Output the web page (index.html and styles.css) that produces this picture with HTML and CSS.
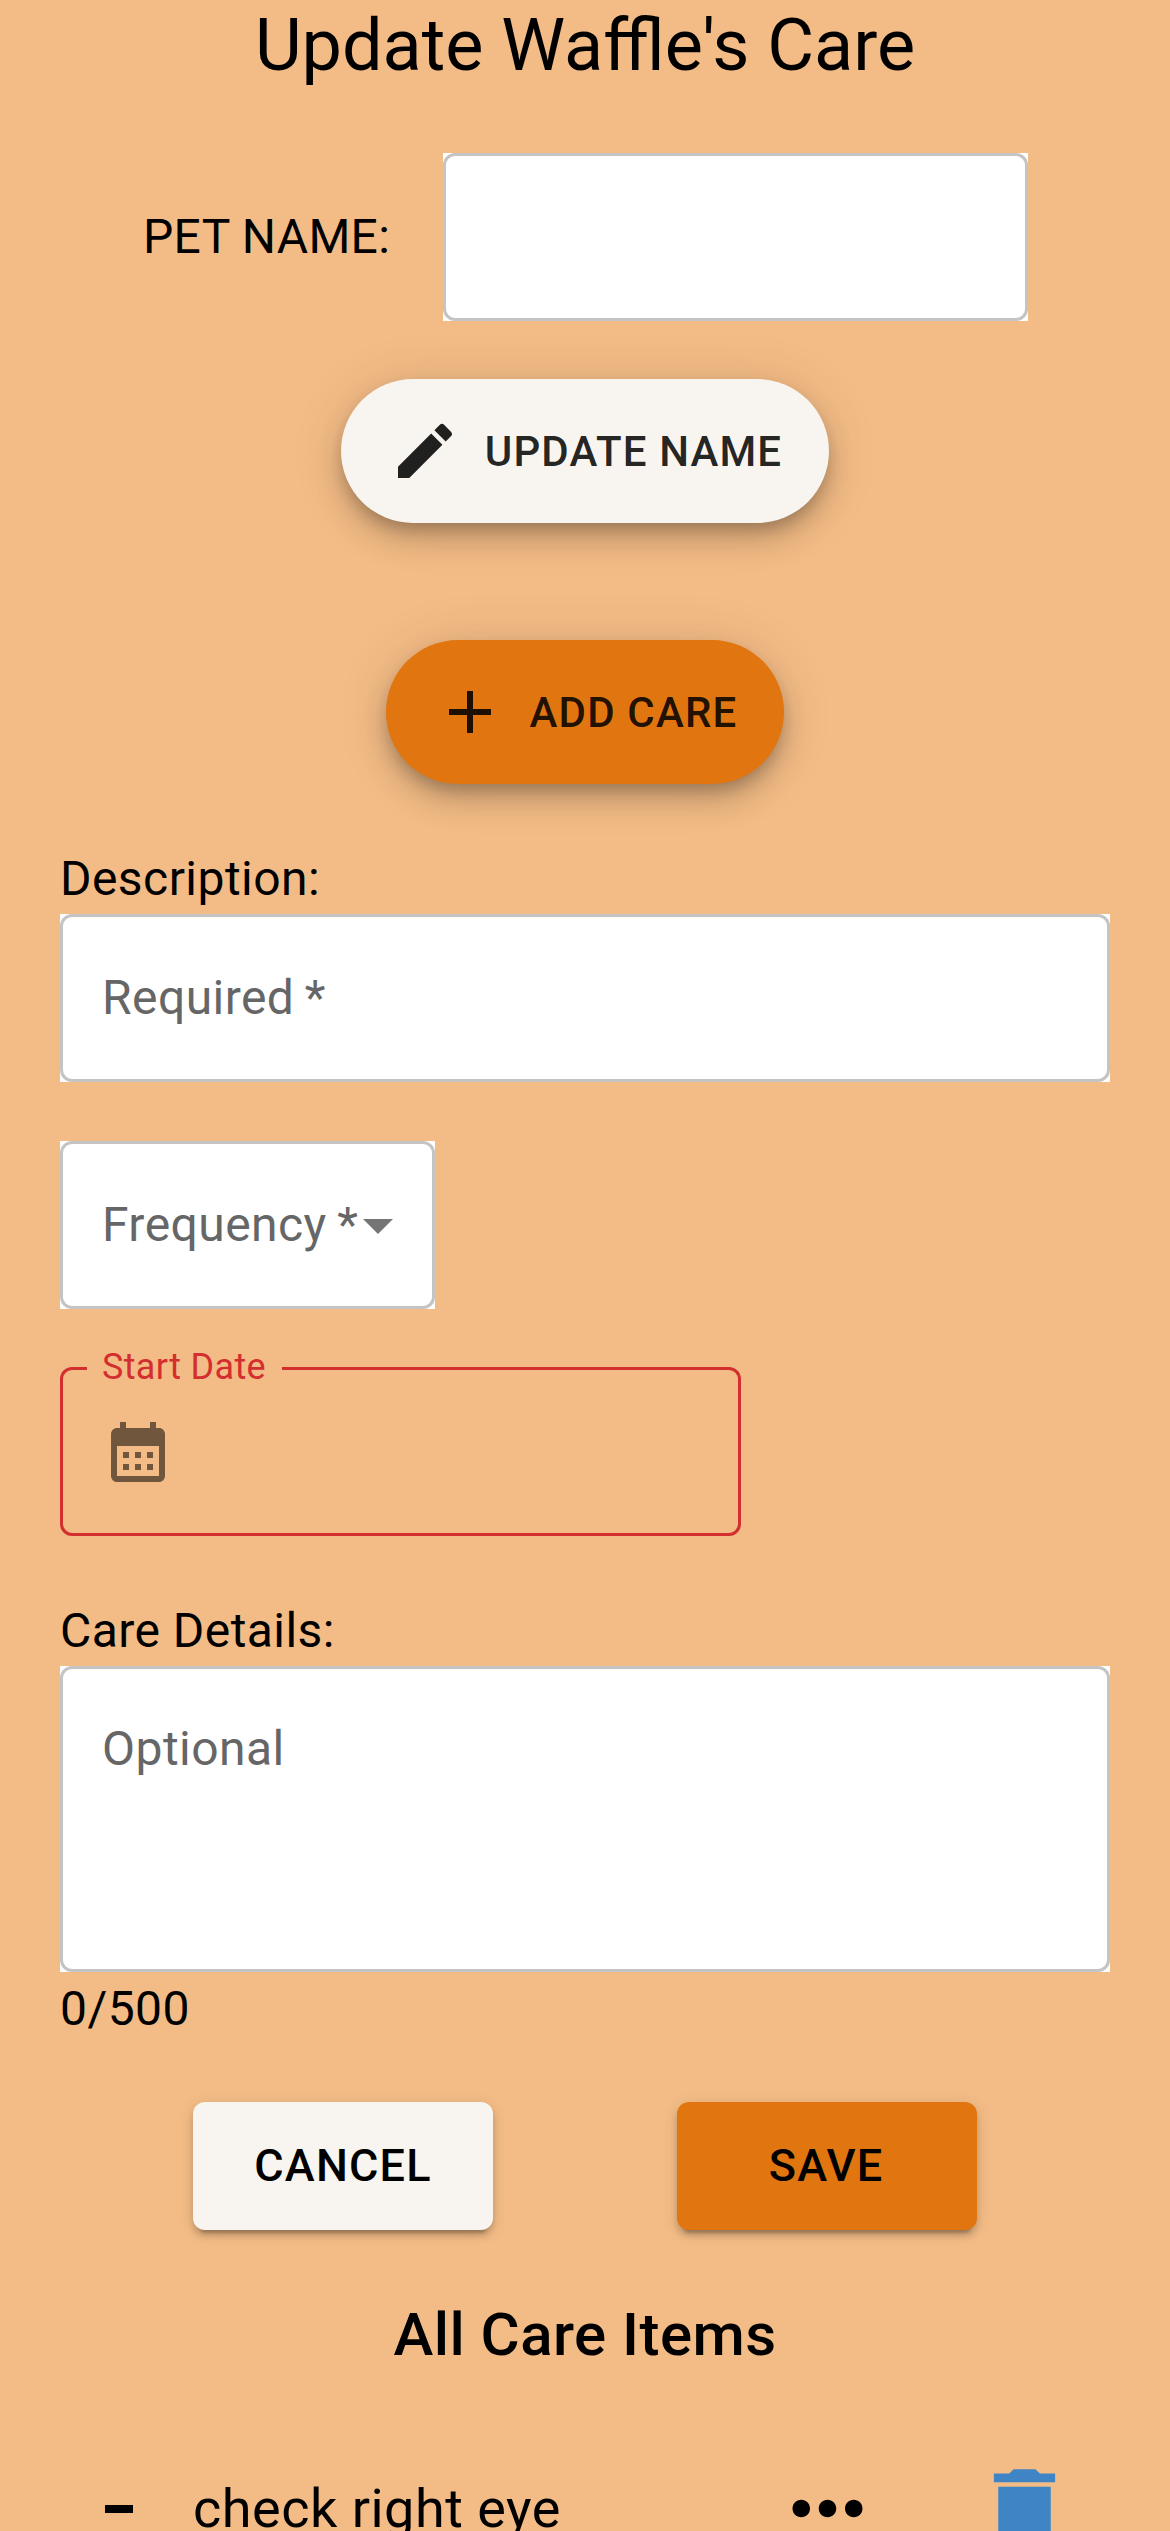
FILE: index.html
```html
<!DOCTYPE html>
<html lang="en">
<head>
<meta charset="utf-8">
<title>Update Waffle's Care</title>
<link rel="stylesheet" href="styles.css">
</head>
<body>
<main class="page">
  <h1 class="title">Update Waffle's Care</h1>

  <div class="name-row">
    <label class="label name-label">PET NAME:</label>
    <div class="field name-field"></div>
  </div>

  <button class="fab fab-light">
    <svg class="icon" viewBox="0 0 24 24"><path d="M3 17.25V21h3.75L17.81 9.94l-3.75-3.75L3 17.25zM20.71 7.04c.39-.39.39-1.02 0-1.41l-2.34-2.34a.9959.9959 0 0 0-1.41 0l-1.83 1.83 3.75 3.75 1.83-1.83z"/></svg>
    <span>UPDATE NAME</span>
  </button>
  <button class="fab fab-orange">
    <svg class="icon" viewBox="0 0 24 24"><path d="M19 13h-6v6h-2v-6H5v-2h6V5h2v6h6v2z"/></svg>
    <span>ADD CARE</span>
  </button>

  <form class="form">
    <label class="label">Description:</label>
    <div class="field"><span class="hint">Required *</span></div>

    <div class="field frequency">
      <span class="hint">Frequency *</span>
      <svg class="icon arrow" viewBox="0 0 24 24"><path d="M7 10l5 5 5-5z"/></svg>
    </div>

    <fieldset class="date">
      <legend class="legend">Start Date</legend>
      <svg class="icon calendar" viewBox="0 0 24 24"><path d="M19 4h-1V2h-2v2H8V2H6v2H5c-1.11 0-1.99.9-1.99 2L3 20c0 1.1.89 2 2 2h14c1.1 0 2-.9 2-2V6c0-1.1-.9-2-2-2zm0 16H5V10h14v10zM9 14H7v-2h2v2zm4 0h-2v-2h2v2zm4 0h-2v-2h2v2zm-8 4H7v-2h2v2zm4 0h-2v-2h2v2zm4 0h-2v-2h2v2z"/></svg>
    </fieldset>

    <label class="label">Care Details:</label>
    <div class="field details"><span class="hint">Optional</span></div>
    <div class="label counter">0/500</div>
  </form>

  <div class="actions">
    <button class="button button-light">CANCEL</button>
    <button class="button button-orange">SAVE</button>
  </div>

  <h2 class="subtitle">All Care Items</h2>

  <div class="item">
    <span class="dash"></span>
    <span class="item-name">check right eye</span>
    <svg class="item-icon" viewBox="0 0 24 24"><path d="M6 10c-1.1 0-2 .9-2 2s.9 2 2 2 2-.9 2-2-.9-2-2-2zm12 0c-1.1 0-2 .9-2 2s.9 2 2 2 2-.9 2-2-.9-2-2-2zm-6 0c-1.1 0-2 .9-2 2s.9 2 2 2 2-.9 2-2-.9-2-2-2z"/></svg>
    <svg class="item-icon trash" viewBox="0 0 24 24"><path d="M6 19c0 1.1.9 2 2 2h8c1.1 0 2-.9 2-2V7H6v12zM19 4h-3.5l-1-1h-5l-1 1H5v2h14V4z"/></svg>
  </div>
</main>
</body>
</html>
```

FILE: styles.css
```css
* {
  box-sizing: border-box;
}

body {
  margin: 0;
  background: #f3bc86;
  color: #000;
  font-family: Roboto, "Liberation Sans", sans-serif;
}

button {
  border: 0;
  font-family: inherit;
}

.page {
  display: flex;
  flex-direction: column;
  align-items: center;
  width: 1170px;
  height: 2531px;
  overflow: hidden;
}

.title {
  flex: none;
  margin: 0 0 61px;
  font-size: 72px;
  font-weight: 400;
  line-height: 91px;
}

.label {
  padding-top: 1px;
  font-size: 48px;
  line-height: 71px;
  letter-spacing: 0.45px;
}

.name-row {
  flex: none;
  display: flex;
  align-items: center;
  width: 886px;
  height: 169px;
}

.name-label {
  width: 301px;
  padding: 0 0 0 1px;
  letter-spacing: 0.3px;
}

/* Square white backing with a rounded outline inside it */
.field {
  display: flex;
  align-items: center;
  height: 168px;
  padding-left: 42px;
  background: #fff;
  position: relative;
}

.field::after {
  content: "";
  position: absolute;
  inset: 0;
  border: 3px solid #c4c4c4;
  border-radius: 12px;
}

.name-field {
  width: 585px;
}

.hint {
  padding-bottom: 2px;
  color: #666;
  font-size: 48px;
  line-height: 69px;
  letter-spacing: 0.45px;
  word-spacing: -2px;
  white-space: nowrap;
}

.icon {
  flex: none;
  width: 72px;
  height: 72px;
  fill: currentColor;
}

.fab {
  flex: none;
  display: flex;
  align-items: center;
  gap: 24px;
  height: 144px;
  padding: 0 47px 0 48px;
  border-radius: 72px;
  color: rgba(0, 0, 0, 0.87);
  font-size: 42px;
  font-weight: 500;
  letter-spacing: 1.15px;
  white-space: nowrap;
  box-shadow: 0 9px 15px -3px rgba(0, 0, 0, 0.2),
    0 18px 30px 0 rgba(0, 0, 0, 0.14),
    0 3px 54px 0 rgba(0, 0, 0, 0.12);
}

.fab-light {
  margin-top: 58px;
  background: #f8f5f0;
}

.fab-orange {
  margin-top: 117px;
  background: #e17510;
}

.form {
  flex: none;
  display: flex;
  flex-direction: column;
  width: 1050px;
  margin-top: 58px;
}

.frequency {
  width: 375px;
  margin-top: 59px;
}

.arrow {
  margin-left: -16px;
  fill: #757575;
}

.date {
  width: 681px;
  height: 187px;
  margin: 40px 0 58px;
  padding: 0 0 0 24px;
  border: 3px solid #d32f2f;
  border-radius: 12px;
}

.legend {
  height: 39px;
  padding: 1px 16px 0 15px;
  color: #d32f2f;
  font-size: 36px;
  line-height: 35px;
  letter-spacing: 0.34px;
}

.calendar {
  display: block;
  margin: 28px 0 0 15px;
  fill: rgba(0, 0, 0, 0.54);
}

.details {
  align-items: flex-start;
  height: 306px;
  padding-top: 48px;
}

.counter {
  margin-top: 1px;
  padding-top: 0;
  line-height: 72px;
}

.actions {
  flex: none;
  display: flex;
  justify-content: space-between;
  width: 784px;
  margin-top: 57px;
}

.button {
  width: 300px;
  height: 128px;
  padding: 0 0 2px;
  border-radius: 12px;
  color: #000;
  font-size: 45px;
  font-weight: 500;
  letter-spacing: 1.2px;
  box-shadow: 0 9px 3px -6px rgba(0, 0, 0, 0.2),
    0 6px 6px 0 rgba(0, 0, 0, 0.14),
    0 3px 15px 0 rgba(0, 0, 0, 0.12);
}

.button-light {
  background: #f8f5f0;
}

.button-orange {
  padding-right: 2px;
  background: #e17510;
}

.subtitle {
  flex: none;
  margin: 69px 0 0;
  font-size: 60px;
  font-weight: 500;
  line-height: 72px;
  letter-spacing: 0.45px;
}

.item {
  flex: none;
  display: flex;
  align-items: center;
  align-self: flex-start;
  height: 105px;
  margin: 85px 0 0 105px;
}

.dash {
  flex: none;
  width: 28px;
  height: 8px;
  background: #000;
}

.item-name {
  flex: none;
  width: 582px;
  margin-left: 60px;
  font-size: 54px;
  letter-spacing: 0.5px;
}

.item-icon {
  flex: none;
  width: 105px;
  height: 105px;
}

.trash {
  margin-left: 92px;
  fill: #3f85c6;
}
```
